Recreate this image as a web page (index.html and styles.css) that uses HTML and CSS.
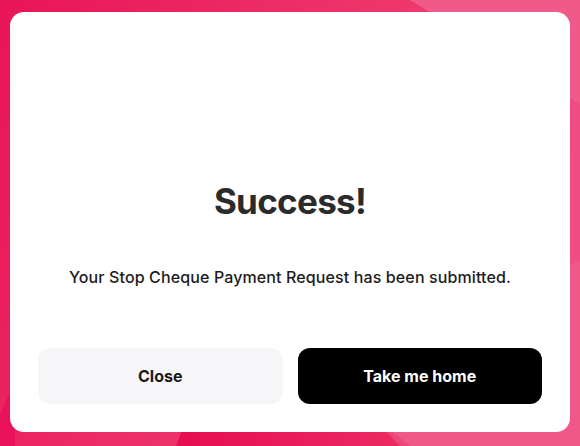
FILE: index.html
```html
<!DOCTYPE html>
<html lang="en">
<head>
<meta charset="utf-8">
<title>Success</title>
<link rel="stylesheet" href="styles.css">
</head>
<body>
<svg class="backdrop" viewBox="0 0 580 446" preserveAspectRatio="none" aria-hidden="true">
  <defs>
    <linearGradient id="base" x1="0" y1="0" x2="1" y2="0.3">
      <stop offset="0" stop-color="#e91459"/>
      <stop offset="0.7" stop-color="#ee3b6d"/>
      <stop offset="1" stop-color="#ef4d84"/>
    </linearGradient>
    <linearGradient id="dark" x1="0" y1="0" x2="1" y2="0">
      <stop offset="0" stop-color="#e60d50"/>
      <stop offset="1" stop-color="#ec2a62"/>
    </linearGradient>
  </defs>
  <rect x="0" y="0" width="580" height="446" fill="url(#base)"/>
  <polygon points="176,446 240,280 400,446" fill="url(#dark)"/>
  <polygon points="330,382 580,260 580,446 410,446" fill="#f0588a"/>
  <polygon points="410,0 580,0 580,104" fill="#f05a8a"/>
  <polygon points="0,415 15,380 15,446 0,446" fill="#e8115a"/>
</svg>
<main class="card">
  <h1 class="title">Success!</h1>
  <p class="message">Your Stop Cheque Payment Request has been submitted.</p>
  <div class="actions">
    <button class="btn btn-light" type="button">Close</button>
    <button class="btn btn-dark" type="button">Take me home</button>
  </div>
</main>
</body>
</html>
```
FILE: styles.css
```css
* { box-sizing: border-box; }
html, body { margin: 0; padding: 0; }
body {
  width: 580px;
  height: 446px;
  overflow: hidden;
  position: relative;
  font-family: Inter, "Noto Sans", "Liberation Sans", sans-serif;
  padding: 12px 10px 14px 10px;
}
.backdrop {
  position: absolute;
  left: 0;
  top: 0;
  width: 580px;
  height: 446px;
  z-index: 0;
}
.card {
  position: relative;
  z-index: 1;
  width: 560px;
  height: 420px;
  background: #ffffff;
  border-radius: 14px;
  padding: 0 28px 28px 28px;
  display: flex;
  flex-direction: column;
  align-items: center;
}
.title {
  margin: 167px 0 0 0;
  font-size: 35px;
  line-height: 44px;
  font-weight: 700;
  letter-spacing: -0.02em;
  color: #2b2b2b;
}
.message {
  margin: 43px 0 0 0;
  font-size: 16px;
  line-height: 22px;
  font-weight: 500;
  letter-spacing: 0.12px;
  color: #1c1c1c;
}
.actions {
  margin-top: auto;
  width: 100%;
  display: flex;
  gap: 15px;
}
.btn {
  flex: 1;
  height: 56px;
  border: none;
  border-radius: 12px;
  font-family: inherit;
  font-size: 16px;
  font-weight: 700;
  cursor: pointer;
}
.btn-light {
  background: #f6f6f8;
  color: #1a1a1a;
}
.btn-dark {
  background: #000000;
  color: #ffffff;
}
```
